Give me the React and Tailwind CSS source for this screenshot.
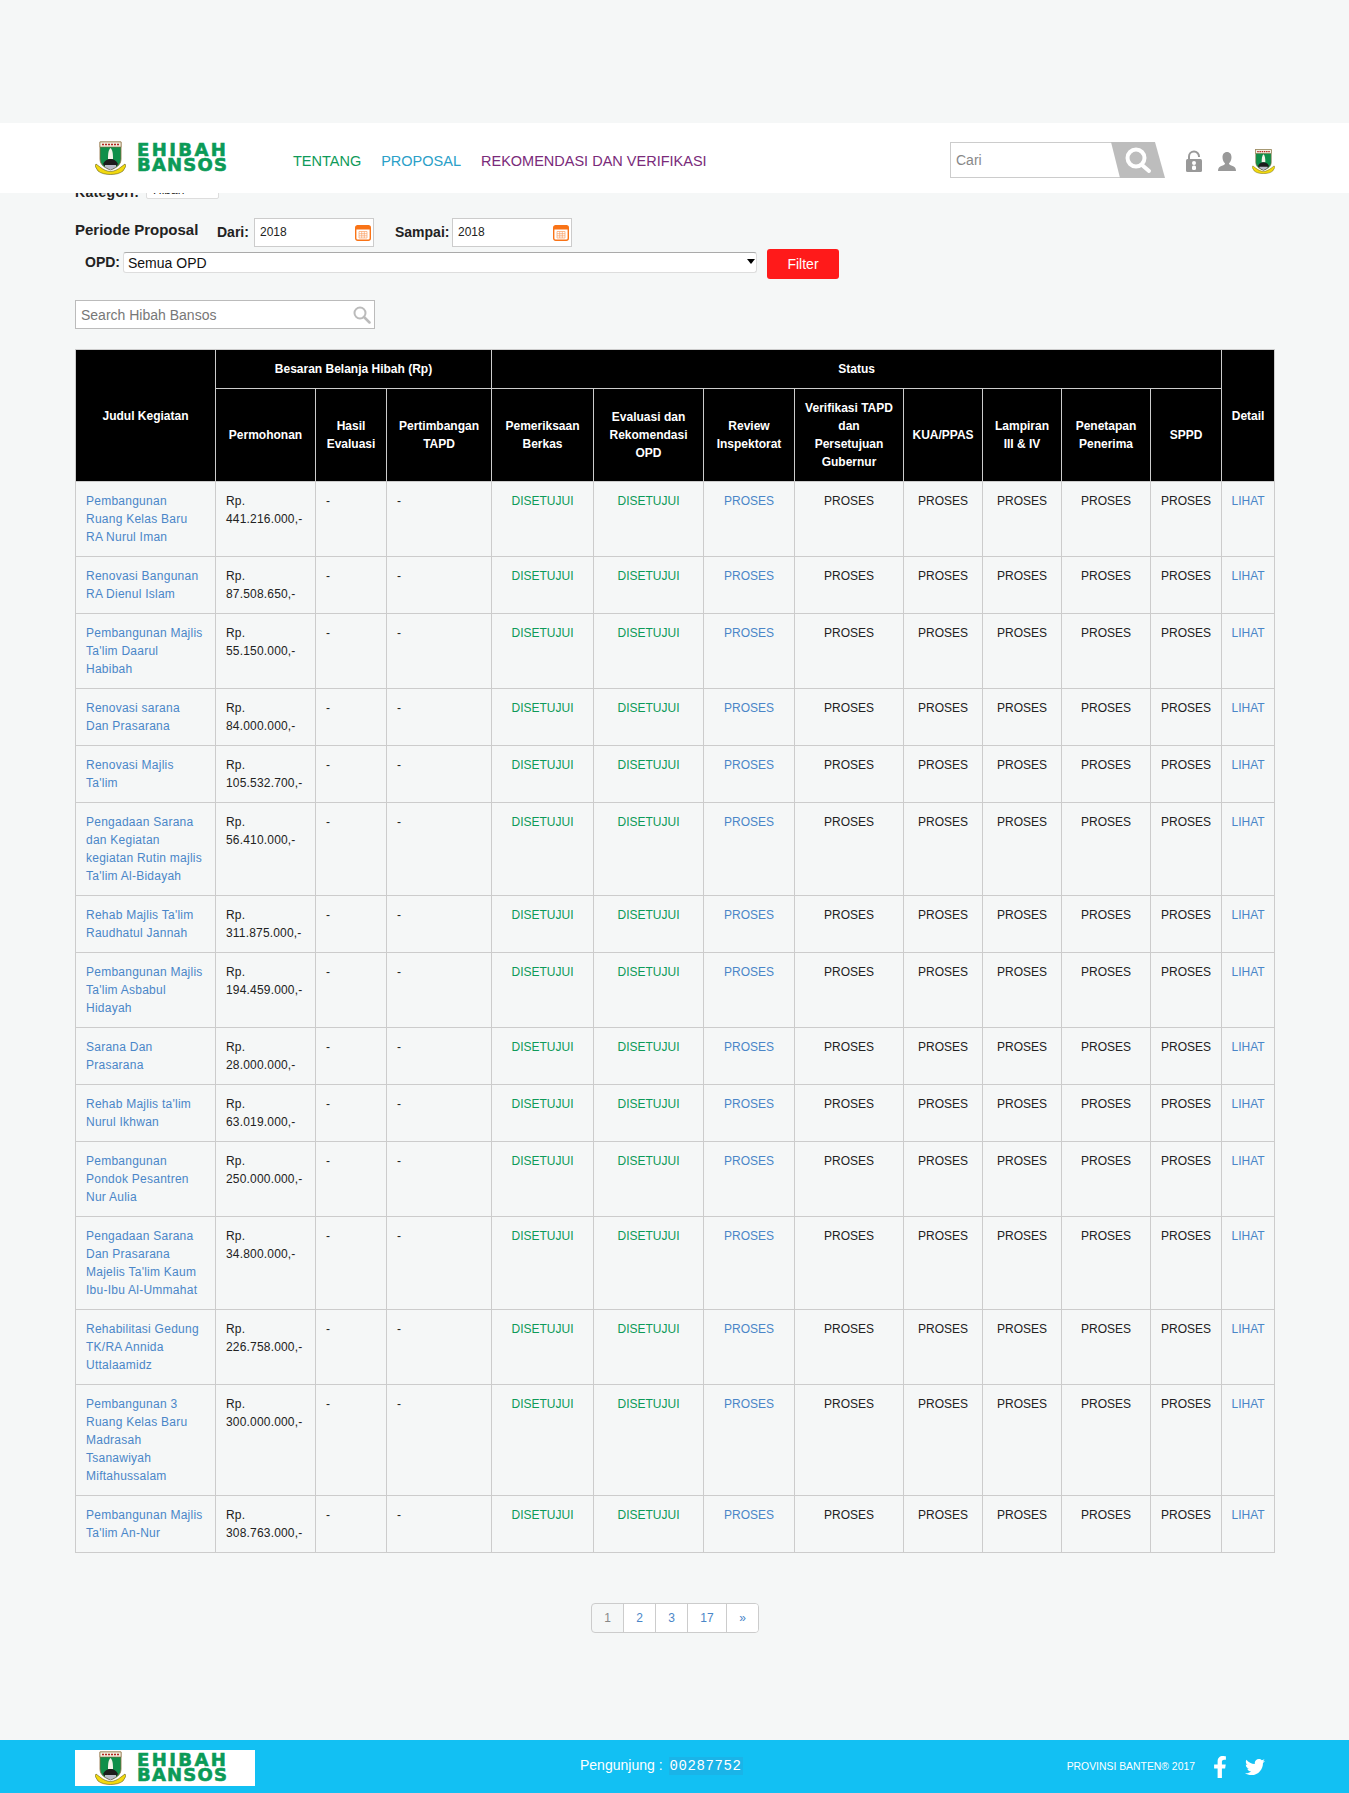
import React from "react";
import { FaFacebookF, FaTwitter } from "react-icons/fa";

const rows = [
  ["Pembangunan\nRuang Kelas Baru\nRA Nurul Iman", "441.216.000,-"],
  ["Renovasi Bangunan\nRA Dienul Islam", "87.508.650,-"],
  ["Pembangunan Majlis\nTa'lim Daarul\nHabibah", "55.150.000,-"],
  ["Renovasi sarana\nDan Prasarana", "84.000.000,-"],
  ["Renovasi Majlis\nTa'lim", "105.532.700,-"],
  ["Pengadaan Sarana\ndan Kegiatan\nkegiatan Rutin majlis\nTa'lim Al-Bidayah", "56.410.000,-"],
  ["Rehab Majlis Ta'lim\nRaudhatul Jannah", "311.875.000,-"],
  ["Pembangunan Majlis\nTa'lim Asbabul\nHidayah", "194.459.000,-"],
  ["Sarana Dan\nPrasarana", "28.000.000,-"],
  ["Rehab Majlis ta'lim\nNurul Ikhwan", "63.019.000,-"],
  ["Pembangunan\nPondok Pesantren\nNur Aulia", "250.000.000,-"],
  ["Pengadaan Sarana\nDan Prasarana\nMajelis Ta'lim Kaum\nIbu-Ibu Al-Ummahat", "34.800.000,-"],
  ["Rehabilitasi Gedung\nTK/RA Annida\nUttalaamidz", "226.758.000,-"],
  ["Pembangunan 3\nRuang Kelas Baru\nMadrasah\nTsanawiyah\nMiftahussalam", "300.000.000,-"],
  ["Pembangunan Majlis\nTa'lim An-Nur", "308.763.000,-"],
];

const colWidths = ["w-[140px]", "w-[100px]", "w-[71px]", "w-[105px]", "w-[102px]", "w-[110px]", "w-[91px]", "w-[109px]", "w-[79px]", "w-[79px]", "w-[89px]", "w-[71px]", "w-[53px]"];

const Crest = ({ className }) => (
  <svg viewBox="0 0 31 34" className={className}>
    <path d="M5 1h21v17c0 6-5 9-10.500 11C10 27 5 24 5 18z" fill="#0f8f4a" stroke="#8a6a3a" strokeWidth="0.8" />
    <rect x="5" y="1" width="21" height="5" fill="#f3efe2" stroke="#8a6a3a" strokeWidth="0.6" />
    <path d="M7 3.500h17" stroke="#b3261e" strokeWidth="1.500" strokeDasharray="2 1" />
    <path d="M15.500 7c2 2 2.500 5 2.500 11h-5c0-6 .5-9 2.500-11z" fill="#f4f4ea" />
    <path d="M8 23c2-4 5-5 7.500-5s5.500 1 7.500 5c-2 3-5 5-7.500 6-2.500-1-5.500-3-7.500-6z" fill="#1c1c1c" />
    <path d="M10 24h11v2l-5.500 3-5.500-3z" fill="#b9bcc8" />
    <path d="M1 23l4 3c3 2.500 7 4.500 10.500 4.500S23 28.500 26 26l4-3 1 2-3 5c-3 2.500-8 3.500-12.500 3.500S6 32.500 3 30l-3-5z" fill="#f2d90f" stroke="#5f5a10" strokeWidth="0.6" />
  </svg>
);

const LogoText = () => (
  <div className="-mt-[2px] font-['DejaVu_Sans',sans-serif] font-bold text-[18px] leading-[15px] text-[#0b9a57] [-webkit-text-stroke:0.6px_#0b9a57]">
    <div className="tracking-[2.4px]">EHIBAH</div>
    <div className="tracking-[1.2px]">BANSOS</div>
  </div>
);

const Calendar = () => (
  <svg viewBox="0 0 16 17" className="w-4 h-[17px] absolute right-[2px] top-[5px]">
    <rect x="0.700" y="1.700" width="14.600" height="14.600" rx="2" fill="#fff" stroke="#f97316" strokeWidth="1.400" />
    <rect x="1" y="2" width="14" height="3.500" fill="#f97316" />
    <path d="M3 1v2M13 1v2" stroke="#f97316" strokeWidth="1.400" />
    <path d="M4 7.500h8v6.500H4zM4 9.700h8M4 11.800h8M6.700 7.500v6.500M9.300 7.500v6.500" fill="none" stroke="#f9a066" strokeWidth="0.700" />
  </svg>
);

const DateBox = () => (
  <div className="relative w-[120px] h-[29px] border border-[#ccc] bg-white">
    <input readOnly value="2018" className="w-full h-full pl-[5px] pb-[2px] text-[12px] text-[#222] outline-none" />
    <Calendar />
  </div>
);

const Th = ({ children, className = "", ...props }) => (
  <th {...props} className={`border border-[#ccc] bg-black text-white font-bold text-[12px] leading-[18px] px-[6px] align-middle text-center ${className}`}>
    {children}
  </th>
);

const Td = ({ children, className = "" }) => (
  <td className={`border border-[#ccc] pt-[10px] pb-[10px] px-[10px] align-top text-[12px] leading-[18px] ${className}`}>{children}</td>
);

export default function App() {
  return (
    <div className="min-h-[1793px] bg-[#f5f7f7] font-['Liberation_Sans',Arial,sans-serif] text-[#222] overflow-hidden">
      <div className="h-[123px]" />

      <header className="relative z-10 h-[70px] bg-white flex items-center">
        <Crest className="ml-[95px] w-[31px] h-[34px]" />
        <div className="ml-[11px] w-[91px]">
          <LogoText />
        </div>
        <nav className="ml-[65px] flex gap-[20px] text-[14.500px] mt-[8px]">
          <a className="text-[#0e9a59]">TENTANG</a>
          <a className="text-[#2aa0c8]">PROPOSAL</a>
          <a className="text-[#7a2a7a]">REKOMENDASI DAN VERIFIKASI</a>
        </nav>

        <div className="ml-auto relative w-[215px] h-[36px] mt-[4px]">
          <input readOnly placeholder="Cari" className="w-[170px] h-full border border-r-0 border-[#ccc] pl-[5px] text-[14px] placeholder:text-[#888] outline-none" />
          <svg viewBox="0 0 54 36" className="absolute right-0 top-0 w-[54px] h-[36px]">
            <path d="M0 0h44l10 36H9z" fill="#bdbdbd" />
            <circle cx="25" cy="16" r="8.500" fill="none" stroke="#fff" strokeWidth="4" />
            <path d="M31 23l7 6" stroke="#fff" strokeWidth="4" strokeLinecap="round" />
          </svg>
        </div>

        <div className="ml-[21px] mr-[74px] flex items-center gap-[16px] mt-[6px]">
          <svg viewBox="0 0 16 22" className="w-4 h-[22px]">
            <path d="M3 10V6.500a5 5 0 0 1 10 0V7" fill="none" stroke="#999" strokeWidth="2" />
            <rect x="0" y="9" width="16" height="13" rx="1.500" fill="#999" />
            <circle cx="8" cy="13" r="2" fill="#fff" />
            <rect x="6" y="15.500" width="4" height="4.500" rx="1.500" fill="#fff" />
          </svg>
          <svg viewBox="0 0 18 19" className="w-[18px] h-[19px]">
            <path d="M9 0c3 0 4.500 2.300 4.500 5.200 0 2.500-1 4.800-2.500 6 0 1.300 1 1.800 3 2.500 2.700 1 4 2 4 5.300H0c0-3.300 1.300-4.300 4-5.300 2-.7 3-1.200 3-2.500-1.500-1.200-2.500-3.500-2.500-6C4.500 2.300 6 0 9 0z" fill="#999" />
          </svg>
          <Crest className="w-[23px] h-[25px]" />
        </div>
      </header>

      <main className="px-[75px]">
        <div className="-mt-[13px] h-[19px] flex items-start text-[14px] font-bold">
          <span className="leading-[18px] mt-[3px] w-[61px] whitespace-nowrap tracking-[0.3px]">Kategori:</span>
          <div className="ml-[10px] w-[73px] h-[19px] border border-[#ddd] rounded-[2px] bg-white pl-[6px] pt-[2px] font-normal text-[12px] leading-[15px]">Hibah</div>
        </div>

        <div className="mt-[19px] flex items-center h-[29px]">
          <span className="font-bold text-[15px] w-[122px] whitespace-nowrap -mt-[5px]">Periode Proposal</span>
          <span className="ml-[20px] font-bold text-[14px] w-[37px] -mt-[1px]">Dari:</span>
          <DateBox />
          <span className="ml-[21px] font-bold text-[14px] w-[57px] -mt-[1px]">Sampai:</span>
          <DateBox />
        </div>

        <div className="mt-[2px] flex items-start">
          <span className="ml-[10px] w-[38px] mt-[4px] font-bold text-[14px] leading-[18px]">OPD:</span>
          <div className="relative mt-[2px] w-[634px] h-[21px]">
            <select className="w-full h-full appearance-none bg-white border border-[#ddd] border-t-[#aaa] rounded-[3px] pl-[4px] text-[14px] text-[#111]">
              <option>Semua OPD</option>
            </select>
            <span className="absolute right-[2px] top-[8px] border-x-[4px] border-t-[5px] border-x-transparent border-t-black" />
          </div>
          <button className="ml-[10px] w-[72px] h-[30px] bg-[#ff1a1a] rounded-[3px] text-white text-[14px]">Filter</button>
        </div>

        <div className="relative mt-[21px] w-[300px] h-[29px]">
          <input readOnly placeholder="Search Hibah Bansos" className="w-full h-full border border-[#bbb] bg-white pl-[5px] text-[14px] placeholder:text-[#777] outline-none" />
          <svg viewBox="0 0 18 18" className="absolute right-[4px] top-[6px] w-[18px] h-[18px]">
            <circle cx="7" cy="7" r="5.500" fill="none" stroke="#bbb" strokeWidth="2" />
            <path d="M11 11l5.500 5.500" stroke="#bbb" strokeWidth="2.500" strokeLinecap="round" />
          </svg>
        </div>

        <table className="mt-[20px] w-[1199px] table-fixed border-collapse">
          <colgroup>
            {colWidths.map((w, i) => (
              <col key={i} className={w} />
            ))}
          </colgroup>
          <thead>
            <tr className="h-[39px]">
              <Th rowSpan={2}>Judul Kegiatan</Th>
              <Th colSpan={3}>Besaran Belanja Hibah (Rp)</Th>
              <Th colSpan={8}>Status</Th>
              <Th rowSpan={2} className="!px-0">Detail</Th>
            </tr>
            <tr className="h-[93px]">
              <Th>Permohonan</Th>
              <Th>Hasil<br />Evaluasi</Th>
              <Th className="!px-0">Pertimbangan<br />TAPD</Th>
              <Th className="!px-0">Pemeriksaan<br />Berkas</Th>
              <Th className="!px-0">Evaluasi dan<br />Rekomendasi<br />OPD</Th>
              <Th className="!px-0">Review<br />Inspektorat</Th>
              <Th className="!px-0">Verifikasi TAPD<br />dan<br />Persetujuan<br />Gubernur</Th>
              <Th className="!px-0">KUA/PPAS</Th>
              <Th className="!px-0">Lampiran<br />III &amp; IV</Th>
              <Th className="!px-0">Penetapan<br />Penerima</Th>
              <Th className="!px-0">SPPD</Th>
            </tr>
          </thead>
          <tbody>
            {rows.map(([title, amount], i) => (
              <tr key={i}>
                <Td className="text-[#4a86c8] whitespace-pre-line tracking-[0.25px]">{title}</Td>
                <Td className="tracking-[0.18px]">
                  Rp.
                  <br />
                  {amount}
                </Td>
                <Td>-</Td>
                <Td>-</Td>
                <Td className="text-center text-[#0e9a59] !px-0">DISETUJUI</Td>
                <Td className="text-center text-[#0e9a59] !px-0">DISETUJUI</Td>
                <Td className="text-center text-[#4a86c8] !px-0">PROSES</Td>
                <Td className="text-center !px-0">PROSES</Td>
                <Td className="text-center !px-0">PROSES</Td>
                <Td className="text-center !px-0">PROSES</Td>
                <Td className="text-center !px-0">PROSES</Td>
                <Td className="text-center !px-0">PROSES</Td>
                <Td className="text-center text-[#4a86c8] !px-0">LIHAT</Td>
              </tr>
            ))}
          </tbody>
        </table>

        <div className="mt-[50px] flex justify-center">
          <div className="flex h-[30px] border border-[#ccc] rounded-[4px] text-[12px] leading-[28px] text-center text-[#4a86c8] ml-[1px] overflow-hidden">
            <span className="w-[31px] text-[#888]">1</span>
            <span className="w-[32px] bg-white border-l border-[#ccc]">2</span>
            <span className="w-[32px] bg-white border-l border-[#ccc]">3</span>
            <span className="w-[39px] bg-white border-l border-[#ccc]">17</span>
            <span className="w-[32px] bg-white border-l border-[#ccc]">»</span>
          </div>
        </div>
      </main>

      <footer className="mt-[107px] h-[53px] bg-[#12c0f3] pl-[75px] pr-[84px] flex items-center text-white">
        <div className="w-[180px] h-[36px] bg-white flex items-center mt-[3px]">
          <Crest className="ml-[20px] w-[31px] h-[34px]" />
          <div className="ml-[11px] w-[91px]">
            <LogoText />
          </div>
        </div>
        <span className="ml-[325px] text-[14px] -mt-[2px]">Pengunjung :</span>
        <span className="ml-[6px] px-[1px] bg-[#1ab4e8] font-['Liberation_Mono',monospace] text-[14px] leading-[18px] tracking-[0.6px] -mt-[2px]">00287752</span>
        <span className="ml-auto text-[10.400px]">PROVINSI BANTEN® 2017</span>
        <FaFacebookF className="ml-[14px] text-[22px]" />
        <FaTwitter className="ml-[14px] text-[20px]" />
      </footer>
    </div>
  );
}
